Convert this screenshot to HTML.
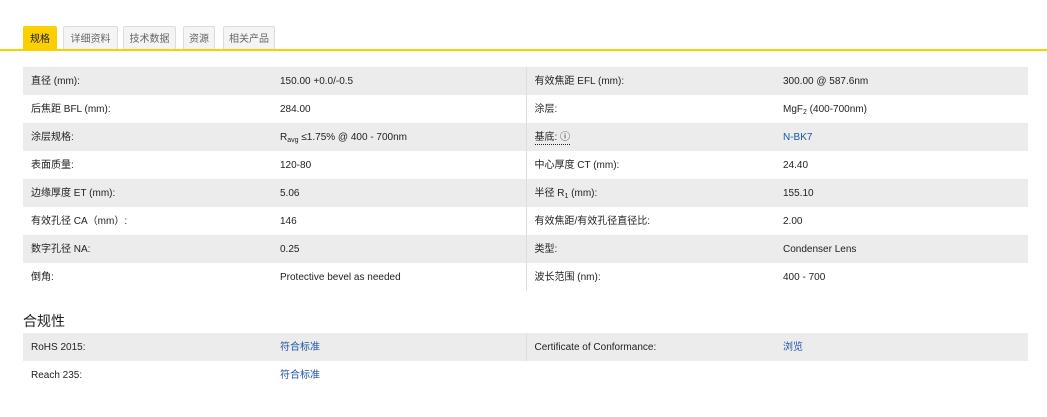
<!DOCTYPE html>
<html><head><meta charset="utf-8"><style>
*{margin:0;padding:0;box-sizing:border-box}
body{width:1047px;height:417px;background:#fff;font-family:"Liberation Sans","Noto Sans CJK SC",sans-serif;color:#222;font-size:10px;position:relative;overflow:hidden}
.tabs{position:absolute;left:23px;top:26px;height:24px}
.tab{position:absolute;top:0;height:24px;border:1px solid #ddd;border-bottom:none;background:#f4f4f4;color:#666;font-size:10px;line-height:26px;text-align:center;border-radius:2px 2px 0 0}
.tab.a{background:#fcd000;border-color:#fcd000;color:#222}
.line{position:absolute;left:0;top:49px;width:1047px;height:2px;background:#fcd000}
table{position:absolute;left:23px;border-collapse:collapse;width:1005px;table-layout:fixed}
td{height:28px;padding:0 0 0 8px;white-space:nowrap;overflow:hidden}
td>div{height:28px;line-height:30px;overflow:hidden}
tr.g td{background:#ececec}
td.c3{border-left:1px solid #ddd}
a{color:#1a56a8;text-decoration:none}
h3{position:absolute;left:23px;top:312px;font-size:14px;font-weight:normal;color:#222;line-height:18px}
sub{font-size:7px;vertical-align:baseline;position:relative;top:2px;line-height:0}
.u{border-bottom:1px dotted #222;line-height:12px;display:inline-block}
</style></head><body>
<div class="tabs">
<div class="tab a" style="left:0;width:34px">规格</div>
<div class="tab" style="left:40px;width:55px">详细资料</div>
<div class="tab" style="left:100px;width:53px">技术数据</div>
<div class="tab" style="left:160px;width:32px">资源</div>
<div class="tab" style="left:200px;width:52px">相关产品</div>
</div>
<div class="line"></div>
<table style="top:67px">
<colgroup><col style="width:249px"><col style="width:254px"><col style="width:249px"><col style="width:253px"></colgroup>
<tr class="g"><td><div>直径 (mm):</div></td><td><div>150.00 +0.0/-0.5</div></td><td class="c3"><div>有效焦距 EFL (mm):</div></td><td><div>300.00 @ 587.6nm</div></td></tr>
<tr><td><div>后焦距 BFL (mm):</div></td><td><div>284.00</div></td><td class="c3"><div>涂层:</div></td><td><div>MgF<sub>2</sub> (400-700nm)</div></td></tr>
<tr class="g"><td><div>涂层规格:</div></td><td><div>R<sub>avg</sub> ≤1.75% @ 400 - 700nm</div></td><td class="c3"><div><span class="u">基底: ⓘ</span></div></td><td><div><a>N-BK7</a></div></td></tr>
<tr><td><div>表面质量:</div></td><td><div>120-80</div></td><td class="c3"><div>中心厚度 CT (mm):</div></td><td><div>24.40</div></td></tr>
<tr class="g"><td><div>边缘厚度 ET (mm):</div></td><td><div>5.06</div></td><td class="c3"><div>半径 R<sub>1</sub> (mm):</div></td><td><div>155.10</div></td></tr>
<tr><td><div>有效孔径 CA（mm）:</div></td><td><div>146</div></td><td class="c3"><div>有效焦距/有效孔径直径比:</div></td><td><div>2.00</div></td></tr>
<tr class="g"><td><div>数字孔径 NA:</div></td><td><div>0.25</div></td><td class="c3"><div>类型:</div></td><td><div>Condenser Lens</div></td></tr>
<tr><td><div>倒角:</div></td><td><div>Protective bevel as needed</div></td><td class="c3"><div>波长范围 (nm):</div></td><td><div>400 - 700</div></td></tr>
</table>
<h3>合规性</h3>
<table style="top:333px">
<colgroup><col style="width:249px"><col style="width:254px"><col style="width:249px"><col style="width:253px"></colgroup>
<tr class="g"><td><div>RoHS 2015:</div></td><td><div><a>符合标准</a></div></td><td class="c3"><div>Certificate of Conformance:</div></td><td><div><a>浏览</a></div></td></tr>
<tr><td><div>Reach 235:</div></td><td><div><a>符合标准</a></div></td><td><div></div></td><td><div></div></td></tr>
</table>
</body></html>
